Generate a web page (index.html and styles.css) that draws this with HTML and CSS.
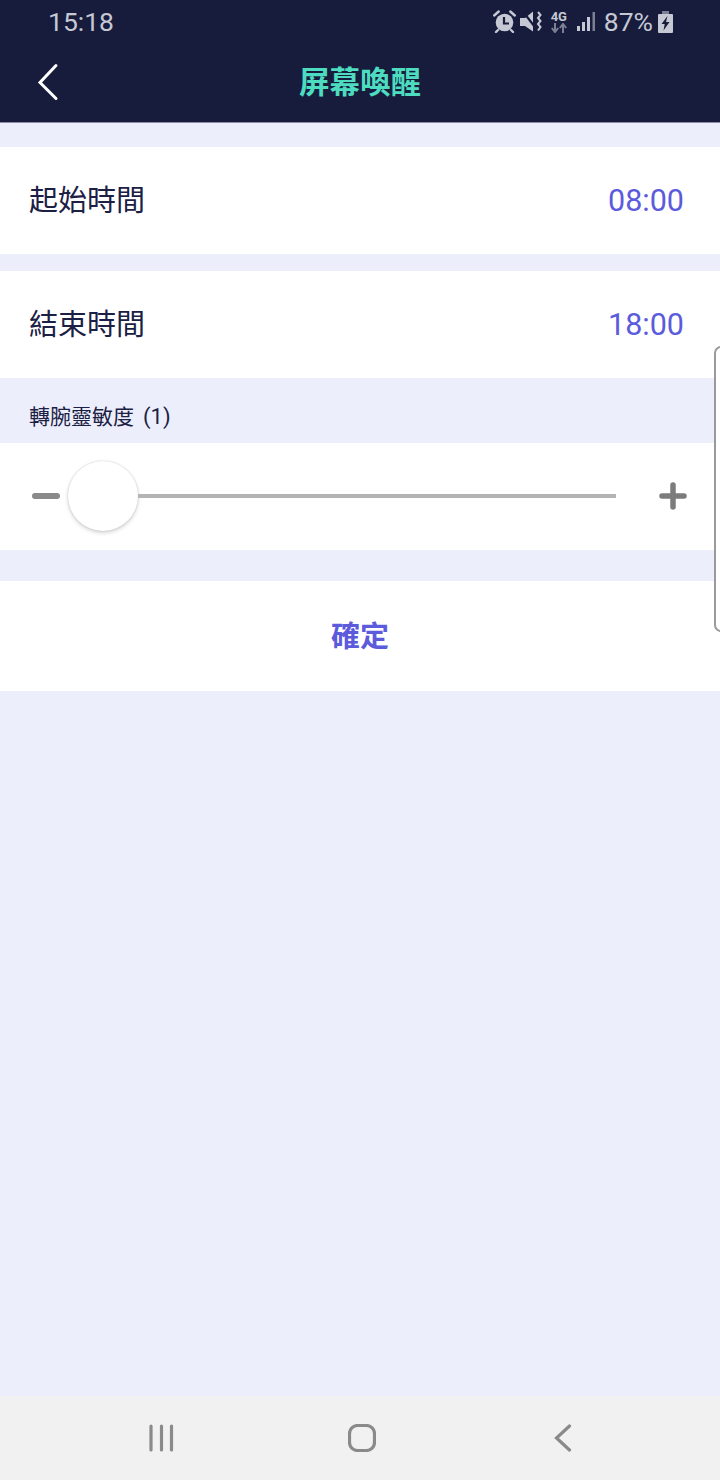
FILE: index.html
```html
<!DOCTYPE html>
<html lang="zh-Hant">
<head>
    <meta charset="UTF-8">
    <meta name="viewport" content="width=device-width, initial-scale=1.0">
    <title>屏幕喚醒</title>
    <link rel="stylesheet" href="styles.css">
</head>
<body>
    <div class="app">
        <div class="topbar">
            <div class="status">
                <span class="clock">15:18</span>
                <div class="status-icons">
                    <svg class="ic-alarm" width="23" height="23" viewBox="0 0 23 23">
                        <circle cx="11.5" cy="12.500" r="8.800" fill="#c6c8d4"/>
                        <path d="M11 7v6.500h5" fill="none" stroke="#171c3d" stroke-width="2.200"/>
                        <path d="M1.200 5.500l4.500-4M21.800 5.500l-4.500-4M5 20l-2 2M18 20l2 2" stroke="#c6c8d4" stroke-width="2.400" stroke-linecap="round"/>
                    </svg>
                    <svg class="ic-mute" width="22" height="21" viewBox="0 0 22 21">
                        <path d="M0 7h5l8-6.500V20.500L5 15H0z" fill="#c6c8d4"/>
                        <path d="M3 0.500l13 17" fill="none" stroke="#171c3d" stroke-width="2.200"/>
                        <path d="M18 1l2.500 3-2.500 3 2.500 3-2.500 3 2.500 3-2.500 3.500" fill="none" stroke="#c6c8d4" stroke-width="2"/>
                    </svg>
                    <div class="net">
                        <span class="net-label">4G</span>
                        <svg width="16" height="10" viewBox="0 0 16 10">
                            <path d="M4 0v8M0.800 5L4 9l3.200-4" fill="none" stroke="#7d8094" stroke-width="2"/>
                            <path d="M12 10V2M8.800 5L12 1l3.200 4" fill="none" stroke="#7d8094" stroke-width="2"/>
                        </svg>
                    </div>
                    <svg class="ic-signal" width="18" height="19" viewBox="0 0 18 19">
                        <path d="M0 14h3v5H0zM5 10h3v9H5zM10 5h3v14h-3z" fill="#c6c8d4"/>
                        <path d="M15.500 0h2.500v19h-2.500z" fill="#7d8094"/>
                    </svg>
                    <span class="battery-text">87%</span>
                    <svg class="ic-battery" width="15" height="22" viewBox="0 0 15 22">
                        <path d="M4 0h7v3h3a1 1 0 0 1 1 1v17a1 1 0 0 1-1 1H1a1 1 0 0 1-1-1V4a1 1 0 0 1 1-1h3z" fill="#c6c8d4"/>
                        <path d="M4 0h7v3H4z" fill="#7d8094"/>
                        <path d="M9.500 5L3.500 13h3.200L5.500 19.500 11.500 11H8z" fill="#171c3d"/>
                    </svg>
                </div>
            </div>
            <div class="navbar">
                <svg class="back" width="24" height="38" viewBox="0 0 24 38">
                    <path d="M20 2.500L4 19.500l16 16" fill="none" stroke="#fff" stroke-width="3" stroke-linecap="round"/>
                </svg>
                <h1 class="title">屏幕喚醒</h1>
            </div>
        </div>

        <div class="content">
            <div class="row">
                <span class="row-label">起始時間</span>
                <span class="row-value">08:00</span>
            </div>
            <div class="row row-second">
                <span class="row-label">結束時間</span>
                <span class="row-value">18:00</span>
            </div>
            <div class="section-label">轉腕靈敏度<span class="section-value">(1)</span></div>
            <div class="slider-row">
                <span class="minus"></span>
                <span class="thumb"></span>
                <span class="track"></span>
                <svg class="plus" width="28" height="28" viewBox="0 0 28 28">
                    <path d="M3 14h22M14 3v22" fill="none" stroke="#7c7c7c" stroke-width="5.500" stroke-linecap="round"/>
                </svg>
            </div>
            <div class="confirm">確定</div>
        </div>

        <div class="softkeys">
            <svg class="key-recent" width="28" height="28" viewBox="0 0 28 28">
                <path d="M4 2v24M14.500 2v24M24.500 2v24" fill="none" stroke="#8a8a8a" stroke-width="3.200" stroke-linecap="round"/>
            </svg>
            <svg class="key-home" width="28" height="28" viewBox="0 0 28 28">
                <rect x="1.500" y="1.500" width="25" height="25" rx="8" fill="none" stroke="#8a8a8a" stroke-width="3.200"/>
            </svg>
            <svg class="key-back" width="18" height="28" viewBox="0 0 18 28">
                <path d="M15.500 2L2.500 14l13 12" fill="none" stroke="#8a8a8a" stroke-width="3.200" stroke-linecap="round"/>
            </svg>
        </div>

        <div class="edge-handle"></div>
    </div>
</body>
</html>
```
FILE: styles.css
```css
* {
    box-sizing: border-box;
}

body {
    margin: 0;
    font-family: Roboto, "Noto Sans CJK TC", sans-serif;
}

.app {
    position: relative;
    display: flex;
    flex-direction: column;
    width: 720px;
    height: 1480px;
    overflow: hidden;
    background-color: #eceefb;
}

.topbar {
    height: 123px;
    background-color: #171c3d;
    border-bottom: 1px solid #8b8da8;
}

.status {
    display: flex;
    justify-content: space-between;
    align-items: center;
    height: 43px;
    padding: 0 47px 0 48px;
    color: #c6c8d4;
}

.clock {
    font-size: 26.500px;
}

.status-icons {
    display: flex;
    align-items: center;
}

.ic-mute {
    margin-left: 4px;
}

.net {
    display: flex;
    flex-direction: column;
    align-items: center;
    width: 18px;
    margin-left: 8px;
}

.net-label {
    font-size: 13px;
    font-weight: 700;
    line-height: 12px;
}

.ic-signal {
    margin-left: 9px;
}

.battery-text {
    margin-left: 9px;
    font-size: 26.500px;
}

.ic-battery {
    margin-left: 5px;
}

.navbar {
    position: relative;
    display: flex;
    justify-content: center;
    align-items: center;
    height: 79px;
}

.back {
    position: absolute;
    left: 36px;
    top: 20px;
}

.title {
    margin: 0 0 5px;
    font-size: 30.500px;
    font-weight: 700;
    color: #4ddcc0;
}

.content {
    flex: 1;
    padding-top: 24px;
}

.row {
    display: flex;
    justify-content: space-between;
    align-items: center;
    height: 107px;
    padding: 0 36px 0 29px;
    background-color: #fff;
}

.row-second {
    margin-top: 17px;
}

.row-label {
    margin-bottom: 5px;
    font-size: 29px;
    color: #1b2044;
}

.row-value {
    font-size: 30.500px;
    color: #5b5bdc;
}

.section-label {
    display: flex;
    align-items: center;
    height: 65px;
    padding: 8px 0 0 29px;
    font-size: 21px;
    color: #1b2044;
}

.section-value {
    margin: 4px 0 0 9px;
    font-size: 22px;
}

.slider-row {
    display: flex;
    align-items: center;
    height: 107px;
    padding: 0 32px 1px 32px;
    background-color: #fff;
}

.minus {
    width: 28px;
    height: 6px;
    border-radius: 3px;
    background-color: #8a8a8a;
}

.thumb {
    flex-shrink: 0;
    width: 70px;
    height: 70px;
    margin-left: 8px;
    border-radius: 50%;
    background-color: #fff;
    box-shadow: 0 0 2px rgba(0, 0, 0, 0.18), 0 2px 4px rgba(0, 0, 0, 0.16);
}

.track {
    width: 478px;
    height: 4px;
    background-color: #b4b4b4;
}

.plus {
    margin-left: 43px;
}

.confirm {
    display: flex;
    justify-content: center;
    align-items: center;
    height: 110px;
    margin-top: 31px;
    padding-bottom: 4px;
    font-size: 29px;
    font-weight: 700;
    color: #5b5bdc;
    background-color: #fff;
}

.softkeys {
    display: flex;
    align-items: center;
    height: 84px;
    padding-left: 147px;
    background-color: #f1f1f1;
}

.key-home {
    margin-left: 173px;
}

.key-back {
    margin-left: 178px;
}

.edge-handle {
    position: absolute;
    right: -8px;
    top: 346px;
    width: 14px;
    height: 286px;
    border: 2px solid #9a9a9a;
    border-radius: 8px;
    background-color: #fff;
}
```
